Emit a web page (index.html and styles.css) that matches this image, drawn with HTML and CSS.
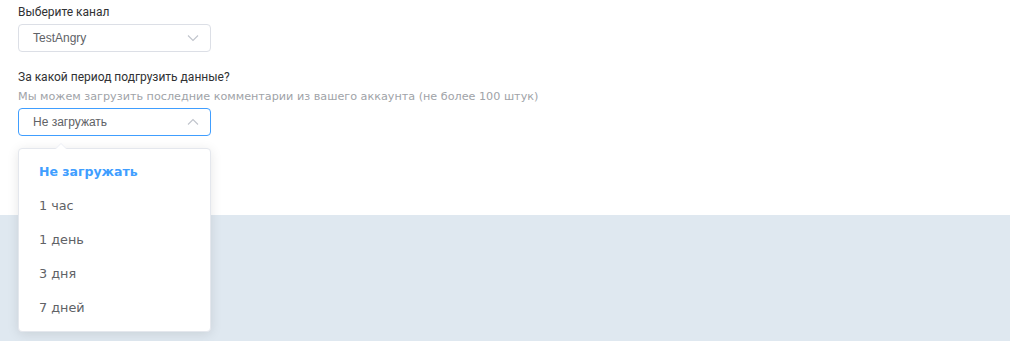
FILE: index.html
```html
<!DOCTYPE html>
<html lang="ru">
<head>
<meta charset="utf-8">
<link rel="stylesheet" href="styles.css">
</head>
<body>
<div class="page">
  <section class="form">
    <div class="label">Выберите канал</div>
    <div class="select">
      <span class="value">TestAngry</span>
      <svg class="arrow" width="12" height="8" viewBox="0 0 12 8"><path d="M1 1.5 L6 6.5 L11 1.5" fill="none" stroke="#c0c4cc" stroke-width="1.1"/></svg>
    </div>
    <div class="label q">За какой период подгрузить данные?</div>
    <div class="hint">Мы можем загрузить последние комментарии из вашего аккаунта (не более 100 штук)</div>
    <div class="select-wrap">
      <div class="select active">
        <span class="value">Не загружать</span>
        <svg class="arrow" width="12" height="8" viewBox="0 0 12 8"><path d="M1 6.5 L6 1.5 L11 6.5" fill="none" stroke="#c0c4cc" stroke-width="1.1"/></svg>
      </div>
      <div class="dropdown">
        <span class="caret"></span>
        <ul class="options">
          <li class="selected">Не загружать</li>
          <li>1 час</li>
          <li>1 день</li>
          <li>3 дня</li>
          <li>7 дней</li>
        </ul>
      </div>
    </div>
  </section>
  <section class="band"></section>
</div>
</body>
</html>
```
FILE: styles.css
```css
* { box-sizing: border-box; }
html, body { margin: 0; padding: 0; }
body {
  width: 1010px;
  height: 341px;
  overflow: hidden;
  background: #fff;
  font-family: Roboto, "Liberation Sans", sans-serif;
  color: #303133;
}
.page { display: flex; flex-direction: column; height: 341px; }
.form {
  height: 215px;
  padding: 5px 18px 0;
  flex: none;
}
.band { flex: 1; background: #dfe8f0; }
.label {
  font-size: 12px;
  line-height: 15px;
  color: #303133;
}
.label.q { margin-top: 18px; }
.hint {
  font-family: "DejaVu Sans", sans-serif;
  font-size: 11.2px;
  line-height: 16px;
  margin-top: 4px;
  color: #a0a3a8;
}
.select {
  width: 193px;
  height: 28px;
  margin-top: 4px;
  border: 1px solid #dcdfe6;
  border-radius: 4px;
  display: flex;
  align-items: center;
  justify-content: space-between;
  padding: 0 11px 0 14px;
  font-family: "Liberation Sans", Arial, sans-serif;
  font-size: 12px;
  color: #606266;
}
.select-wrap .select { margin-top: 3px; }
.select.active { border-color: #409eff; }
.select-wrap { position: relative; }
.dropdown {
  position: absolute;
  left: 0;
  top: 40px;
  width: 193px;
  background: #fff;
  border: 1px solid #e4e7ed;
  border-radius: 4px;
  box-shadow: 0 2px 12px rgba(0,0,0,0.1);
  z-index: 10;
}
.caret {
  position: absolute;
  left: 36px;
  top: -6px;
  width: 0; height: 0;
  border-left: 6px solid transparent;
  border-right: 6px solid transparent;
  border-bottom: 6px solid #ebeef5;
}
.caret::after {
  content: "";
  position: absolute;
  left: -5px;
  top: 1px;
  border-left: 5px solid transparent;
  border-right: 5px solid transparent;
  border-bottom: 5px solid #fff;
}
.options {
  list-style: none;
  margin: 0;
  padding: 6px 0;
}
.options li {
  height: 34px;
  line-height: 34px;
  padding: 0 20px;
  font-family: "DejaVu Sans", sans-serif;
  font-size: 12.8px;
  color: #606266;
}
.options li.selected {
  color: #409eff;
  font-weight: bold;
  font-size: 12.5px;
}
```
